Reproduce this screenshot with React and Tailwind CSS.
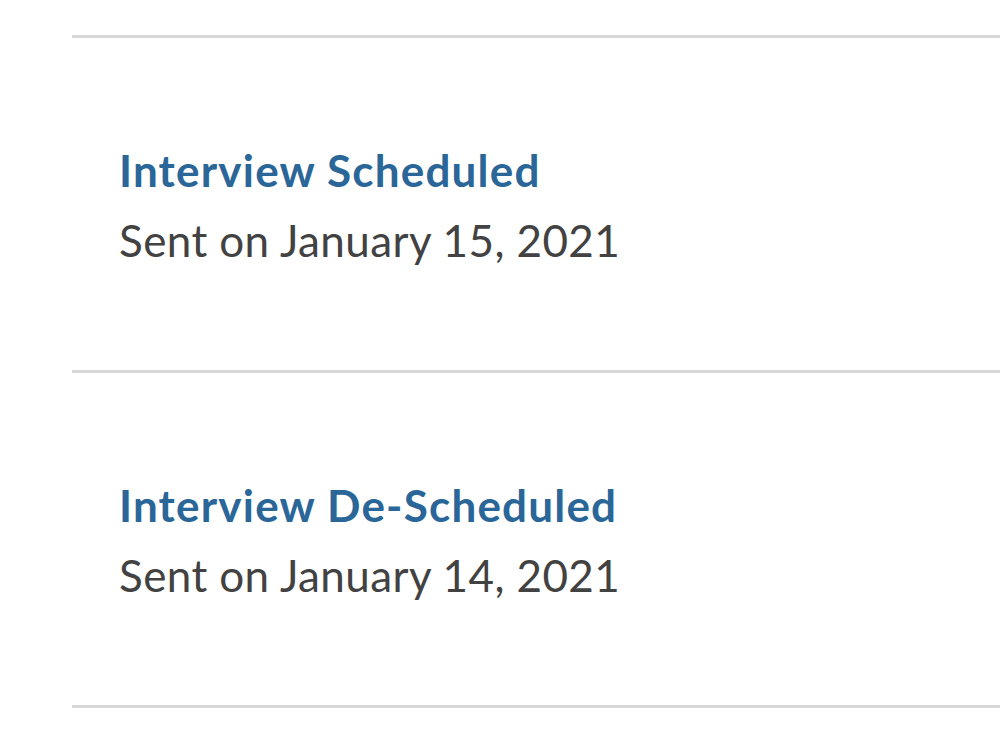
import React from "react";

const messages = [
  { title: "Interview Scheduled", date: "January 15, 2021" },
  { title: "Interview De-Scheduled", date: "January 14, 2021" },
];

export default function App() {
  return (
    <div className="min-h-[745px] bg-white pt-[35px] font-['Lato','Open_Sans',sans-serif]">
      <ul className="ml-[72px] border-b-[3px] border-[#d7d7d7]">
        {messages.map((m) => (
          <li
            key={m.title}
            className="border-t-[3px] border-[#d7d7d7] pl-[47px] pt-[97px] pb-[95px]"
          >
            <p className="text-[44px] leading-[70px] font-bold tracking-[1.2px] text-[#2a6698]">
              {m.title}
            </p>
            <p className="text-[44px] leading-[70px] tracking-[0.4px] text-[#424242]">
              Sent on {m.date}
            </p>
          </li>
        ))}
      </ul>
    </div>
  );
}
